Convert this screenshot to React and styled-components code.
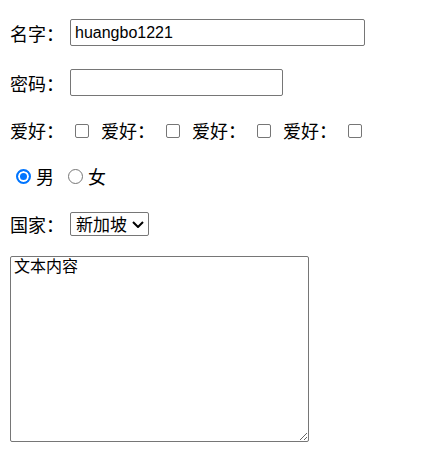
import React from "react";
import styled, { createGlobalStyle } from "styled-components";

const GlobalStyle = createGlobalStyle`
  body {
    margin: 0;
    background: #ffffff;
    color: #000000;
    font-family: "Noto Sans CJK SC", "Liberation Sans", sans-serif;
  }
`;

const Form = styled.form`
  display: flex;
  flex-direction: column;
  padding: 8px 10px 0 10px;
`;

const Row = styled.div`
  display: flex;
  align-items: center;
  height: ${({ $h }) => $h}px;
`;

const Label = styled.span`
  font-size: 18px;
  line-height: 24px;
  white-space: nowrap;
`;

const TextInput = styled.input`
  box-sizing: border-box;
  width: ${({ $w }) => $w}px;
  height: 27px;
  margin: 0 0 0 6px;
  padding: 0 4px;
  border: 1px solid #767676;
  border-radius: 2px;
  font-family: "Liberation Sans", Arial, sans-serif;
  font-size: 16px;
  color: #000000;
  outline: none;
`;

const Hobby = styled.div`
  display: flex;
  align-items: center;
  margin-right: 12px;
`;

const Check = styled.input`
  appearance: none;
  box-sizing: border-box;
  width: 14px;
  height: 14px;
  margin: 1px 0 0 11px;
  border: 1px solid #767676;
  border-radius: 2px;
  background: #ffffff;
`;

const Radio = styled.input`
  appearance: none;
  box-sizing: border-box;
  width: 15px;
  height: 15px;
  margin: 1px 5px 0 ${({ $first }) => ($first ? 6 : 14)}px;
  border: 1px solid #767676;
  border-radius: 50%;
  background: #ffffff;

  &:checked {
    border: 2px solid #0075ff;
    background: #0075ff;
    box-shadow: inset 0 0 0 2px #ffffff;
  }
`;

const SelectBox = styled.div`
  position: relative;
  display: flex;
  margin-left: 6px;
`;

const Select = styled.select`
  appearance: none;
  box-sizing: border-box;
  width: 79px;
  height: 24px;
  margin: 0;
  padding: 0 0 0 5px;
  border: 1px solid #767676;
  border-radius: 2px;
  font-family: "Noto Sans CJK SC", sans-serif;
  font-size: 17px;
  line-height: 22px;
  color: #000000;
  background: #ffffff;
  outline: none;
`;

const Chevron = styled.svg`
  position: absolute;
  right: 5px;
  top: 9px;
  pointer-events: none;
`;

const Area = styled.textarea`
  box-sizing: border-box;
  width: 299px;
  height: 186px;
  margin: 8px 0 0 0;
  padding: 2px 3px;
  border: 1px solid #767676;
  border-radius: 2px;
  font-family: "Liberation Mono", "Noto Sans CJK SC", monospace;
  font-size: 16px;
  line-height: 19px;
  color: #000000;
  outline: none;
`;

const hobbies = ["爱好：", "爱好：", "爱好：", "爱好："];

export default function App() {
  return (
    <>
      <GlobalStyle />
      <Form onSubmit={(e) => e.preventDefault()}>
        <Row $h={49}>
          <Label>名字：</Label>
          <TextInput $w={295} type="text" defaultValue="huangbo1221" />
        </Row>
        <Row $h={51}>
          <Label>密码：</Label>
          <TextInput $w={213} type="password" />
        </Row>
        <Row $h={44}>
          {hobbies.map((h, i) => (
            <Hobby key={i}>
              <Label>{h}</Label>
              <Check type="checkbox" />
            </Hobby>
          ))}
        </Row>
        <Row $h={48}>
          <Radio $first type="radio" name="sex" defaultChecked />
          <Label>男</Label>
          <Radio type="radio" name="sex" />
          <Label>女</Label>
        </Row>
        <Row $h={48}>
          <Label>国家：</Label>
          <SelectBox>
            <Select defaultValue="新加坡">
              <option>中国</option>
              <option>美国</option>
              <option>新加坡</option>
            </Select>
            <Chevron width="12" height="7" viewBox="0 0 12 7">
              <path d="M1 1l5 5 5-5" fill="none" stroke="#000" strokeWidth="2" />
            </Chevron>
          </SelectBox>
        </Row>
        <Area defaultValue="文本内容" />
      </Form>
    </>
  );
}
